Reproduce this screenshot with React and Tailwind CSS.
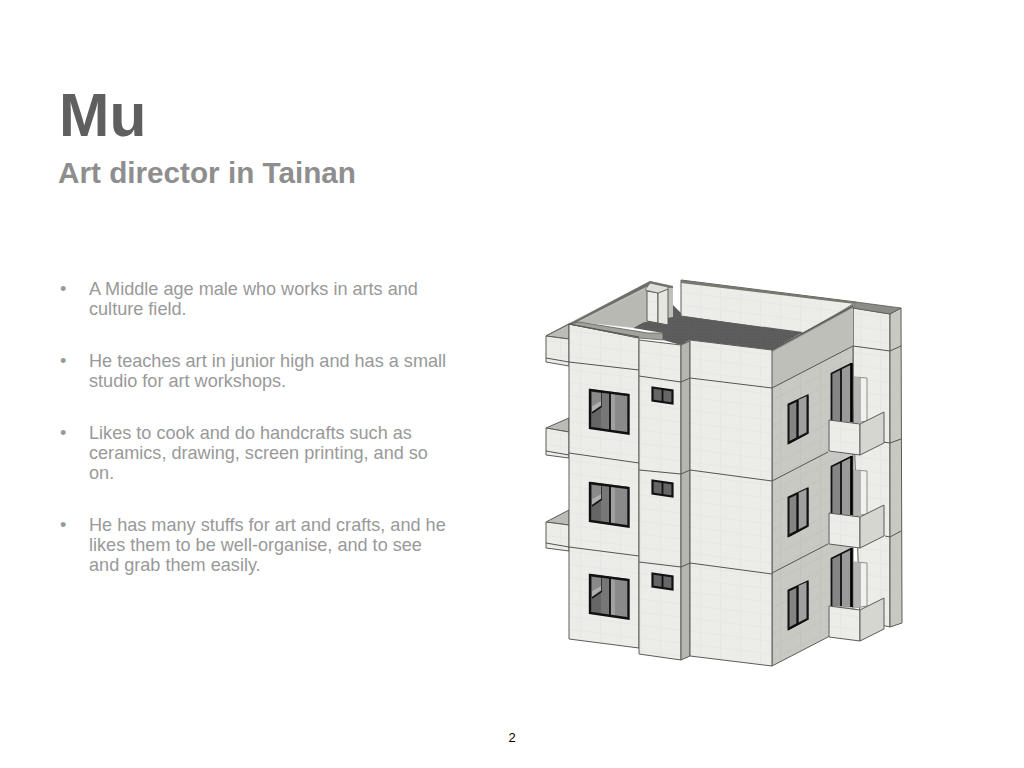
const bullets = [
  ['A Middle age male who works in arts and', 'culture field.'],
  ['He teaches art in junior high and has a small', 'studio for art workshops.'],
  ['Likes to cook and do handcrafts such as', 'ceramics, drawing, screen printing, and so', 'on.'],
  ['He has many stuffs for art and crafts, and he', 'likes them to be well-organise, and to see', 'and grab them easily.'],
];

const edge = '#5c5c56';

function Face({ points, fill, stroke = edge, width = 1 }) {
  return <polygon points={points} fill={fill} stroke={stroke} strokeWidth={width} strokeLinejoin="round" />;
}

function Line({ d, width = 1, color = '#55554f' }) {
  return <path d={d} fill="none" stroke={color} strokeWidth={width} />;
}

// window on the front wall, looks into a room
function FrontWindow({ y }) {
  return (
    <g transform={`translate(0 ${y})`}>
      <polygon points="589,389 629,394 629,434 589,428" fill="#666666" />
      <polygon points="610,392 629,394 629,434 610,431" fill="#8a8a8a" />
      <polygon points="610,392 615,393 615,432 610,431" fill="#a0a0a0" />
      <polygon points="601,392 609,393 609,431 601,430" fill="#777777" />
      <polygon points="592,392 601,393 601,401 592,406" fill="#8a8a8a" />
      <polygon points="592,406 601,401 601,406 592,412" fill="#b0b0b0" />
      <polyline points="592,413 602,406" fill="none" stroke="#1a1a1a" strokeWidth="1.6" />
      <line x1="601.5" y1="392" x2="601.5" y2="407" stroke="#333" strokeWidth="1" />
      <line x1="610" y1="392" x2="610" y2="431" stroke="#111" strokeWidth="1.8" />
      <polygon points="590,390 628.5,395 628.5,433.5 590,428" fill="none" stroke="#111" strokeWidth="2.4" />
    </g>
  );
}

function SmallWindow({ y }) {
  return (
    <g transform={`translate(0 ${y})`}>
      <polygon points="652.5,387.5 672.5,390.5 672.5,403.5 652.5,400.5" fill="#666666" stroke="#111" strokeWidth="2.2" />
      <line x1="662.5" y1="389" x2="662.5" y2="402" stroke="#111" strokeWidth="1.8" />
    </g>
  );
}

function SideWindow({ y }) {
  return (
    <g transform={`translate(0 ${y})`}>
      <polygon points="788.5,404.5 807.5,395.5 807.5,433 788.5,443" fill="#858585" stroke="#111" strokeWidth="2" />
      <polygon points="798,400 807,396 807,433 798,438" fill="#a0a0a0" />
      <line x1="797.5" y1="400" x2="797.5" y2="438" stroke="#111" strokeWidth="2.4" />
      <polyline points="807.5,395.5 807.5,433 788.5,443" fill="none" stroke="#111" strokeWidth="2" />
    </g>
  );
}

function Door({ y }) {
  return (
    <g transform={`translate(0 ${y})`}>
      <polygon points="854,377 867,378 867,421 854,423" fill="#f0f0ee" stroke="#77776f" strokeWidth="0.8" />
      <polygon points="854,377 861,378 861,422 854,423" fill="#b4b4b2" />
      <polygon points="831.5,373.5 851.5,363.5 851.5,422 831.5,421" fill="#858585" />
      <polygon points="842,368 850,364 850,422 842,421" fill="#9a9a9a" />
      <polyline points="831.5,421 831.5,373.5 851.5,363.5" fill="none" stroke="#111" strokeWidth="1.8" />
      <line x1="851.5" y1="363" x2="851.5" y2="422" stroke="#000" strokeWidth="2.6" />
      <line x1="841" y1="369" x2="841" y2="421" stroke="#111" strokeWidth="1.8" />
    </g>
  );
}

function SideBalcony({ y }) {
  return (
    <g transform={`translate(0 ${y})`}>
      <Face points="829,420 860,424 860,455 829,451" fill="url(#frontBricks)" />
      <Face points="860,424 884,412 884,443 860,455" fill="#d6d6d1" />
    </g>
  );
}

function LeftBalcony({ top, topRight, lineL, lineR, botL, botR, back }) {
  return (
    <g>
      <polygon points={`546,${top} 569,${back} 569,${topRight}`} fill="#bcbcb7" stroke={edge} strokeWidth="1" />
      <Face points={`546,${top} 569,${topRight} 569,${botR} 546,${botL}`} fill="url(#frontBricks)" />
      <Line d={`M546 ${lineL} L569 ${lineR}`} />
    </g>
  );
}

function Building() {
  return (
    <svg width="380" height="400" viewBox="530 270 380 400" className="block">
      <defs>
        <pattern id="frontBricks" width="20" height="13" patternUnits="userSpaceOnUse" patternTransform="skewY(7)">
          <rect width="20" height="13" fill="#ececE9" />
          <path d="M0 .5H20M.5 0V13" stroke="#e6e6e2" strokeWidth="1" fill="none" />
        </pattern>
        <pattern id="sideBricks" width="20" height="13" patternUnits="userSpaceOnUse" patternTransform="skewY(-27)">
          <rect width="20" height="13" fill="#c9c9c4" />
          <path d="M0 .5H20M.5 0V13" stroke="#c3c3be" strokeWidth="1" fill="none" />
        </pattern>
        <pattern id="roofGrain" width="3" height="3" patternUnits="userSpaceOnUse">
          <rect width="3" height="3" fill="#5d5d5d" />
          <rect width="1" height="1" fill="#565656" />
        </pattern>
      </defs>

      {/* back wall and roof */}
      <Face points="681,280 856,302 806,334 681,316" fill="url(#frontBricks)" />
      <polygon points="681,280 856,302 855,304 681,283" fill="#77776f" />
      <polygon points="673,305 681,313 681,316 803,332 772,350 690,340 681,345 663,340 663,333 633,328 643,322 667,318" fill="url(#roofGrain)" />

      {/* right wall, behind the side face */}
      <Face points="853,308 890,314 890,627 860,620 853,400" fill="url(#frontBricks)" />
      <Face points="890,314 901,308 902,623 890,627" fill="#c9c9c4" />
      <polygon points="856,302 901,308 890,314 853,308" fill="#8b8b87" stroke={edge} strokeWidth="0.8" />
      <Line d="M853 346 L890 351 L901 346" />
      <Line d="M883 442 L890 443 L901 439" />
      <Line d="M885 536 L890 537 L901 531" />

      {/* side wall */}
      <Face points="772,350 853,307 853,623 828,637 772,666" fill="url(#sideBricks)" />
      <polygon points="772,350 853,304 856,302 853,308 772,353" fill="#8f8f8a" />
      <polygon points="772,352 853,308 853,346 772,388" fill="#bfbfba" />
      <Line d="M772 350 L853 306" width="1.2" />
      <Line d="M772 388 L853 346" />
      <Line d="M772 481 L828 452" />
      <Line d="M772 573 L828 544" />

      <Door y={0} />
      <Door y={93} />
      <Door y={185} />
      <SideBalcony y={0} />
      <SideBalcony y={93} />
      <SideBalcony y={186} />
      <SideWindow y={0} />
      <SideWindow y={93} />
      <SideWindow y={186} />

      {/* parapet on the left side of the roof */}
      <polygon points="546,335 650,281 673,286 673,317 667,318 643,322 633,328 579,322 569,326 546,337" fill="#c0c0bb" />
      <polygon points="546,336 650,281 652,284 569,326" fill="#6f6f6a" />
      <polygon points="579,322 647,289 647,321 633,327" fill="#b9b9b4" />
      <polygon points="650,281 673,286 673,288 668,288 650,284" fill="#77776f" />

      {/* little stair block on the roof */}
      <Face points="647,291 658,293 658,323 647,321" fill="url(#frontBricks)" />
      <Face points="658,293 668,289 668,325 658,323" fill="#e6e6e1" />
      <polygon points="650,283 668,287 668,289 658,293 645,290" fill="#dededa" stroke={edge} strokeWidth="0.7" />

      {/* left balconies */}
      <LeftBalcony top={336} back={324} topRight={339} lineL={358} lineR={362} botL={362} botR={366} />
      <LeftBalcony top={428} back={418} topRight={432} lineL={451} lineR={455} botL={455} botR={458} />
      <LeftBalcony top={522} back={510} topRight={525} lineL={543} lineR={547} botL={548} botR={551} />

      {/* front wall */}
      <Face points="569,324 639,338 639,648 569,639" fill="url(#frontBricks)" />
      <polygon points="569,324 579,322 648,333 663,333 663,340 639,338" fill="#a2a29d" stroke={edge} strokeWidth="0.8" />
      <Line d="M569 324 L639 337" width="1.2" />
      <Line d="M569 362 L639 370" />
      <Line d="M569 453 L639 463" />
      <Line d="M569 547 L639 556" />

      {/* pillar */}
      <Face points="639,340 681,345 681,660 639,654" fill="url(#frontBricks)" />
      <Face points="681,345 690,341 690,656 681,660" fill="#b6b6b1" />
      <Line d="M639 376 L681 382 L690 378" />
      <Line d="M639 470 L681 474 L690 470" />
      <Line d="M639 562 L681 567 L690 563" />

      {/* main front wall */}
      <Face points="690,340 772,350 772,666 690,656" fill="url(#frontBricks)" />
      <Line d="M690 378 L772 388" />
      <Line d="M690 470 L772 481" />
      <Line d="M690 563 L772 574" />

      <FrontWindow y={0} />
      <FrontWindow y={93} />
      <FrontWindow y={185} />
      <SmallWindow y={0} />
      <SmallWindow y={93} />
      <SmallWindow y={186} />
    </svg>
  );
}

export default function App() {
  return (
    <div className="flex h-[768px] w-[1024px] flex-col bg-white font-['Liberation_Sans',Arial,sans-serif]">
      <header className="pl-[59px] pt-[80px]">
        <h1 className="text-[60.5px] font-bold leading-[70px] text-[#5f5f5f]">Mu</h1>
        <h2 className="-ml-px mt-[7px] text-[29.7px] font-bold leading-[32px] text-[#8e8e8e]">Art director in Tainan</h2>
      </header>

      <main className="mt-[81px] flex items-start">
        <ul className="ml-[60px] mt-[9px] flex w-[470px] shrink-0 flex-col gap-[32px] text-[18.1px] leading-[20px] text-[#999999]">
          {bullets.map((lines, i) => (
            <li key={i} className="flex">
              <span className="w-[29px] shrink-0">•</span>
              <div>
                {lines.map((line, j) => (
                  <div key={j} className="whitespace-nowrap">{line}</div>
                ))}
              </div>
            </li>
          ))}
        </ul>
        <Building />
      </main>

      <footer className="mt-[60px] text-center text-[13px] leading-[16px] text-black">2</footer>
    </div>
  );
}
